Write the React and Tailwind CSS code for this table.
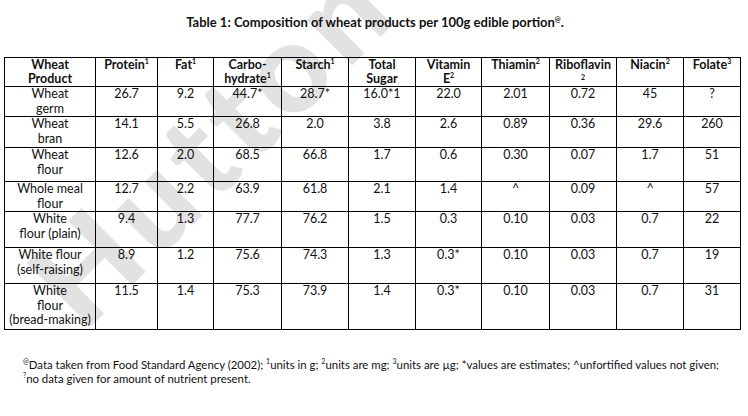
import React from "react";

const Sup = ({ children }) => (
  <span className="relative -top-[5px] text-[7px] leading-none">{children}</span>
);

const cols = [91, 62, 56, 68, 67, 67, 66, 68, 67, 67, 57];

const rows = [
  { h: 30, name: <>Wheat<br />germ</>, v: ["26.7", "9.2", "44.7*", "28.7*", "16.0*1", "22.0", "2.01", "0.72", "45", "?"] },
  { h: 31, name: <>Wheat<br />bran</>, v: ["14.1", "5.5", "26.8", "2.0", "3.8", "2.6", "0.89", "0.36", "29.6", "260"] },
  { h: 34, name: <>Wheat<br />flour</>, v: ["12.6", "2.0", "68.5", "66.8", "1.7", "0.6", "0.30", "0.07", "1.7", "51"] },
  { h: 30, name: <>Whole meal<br />flour</>, v: ["12.7", "2.2", "63.9", "61.8", "2.1", "1.4", "^", "0.09", "^", "57"] },
  { h: 36, name: <>White<br />flour (plain)</>, v: ["9.4", "1.3", "77.7", "76.2", "1.5", "0.3", "0.10", "0.03", "0.7", "22"] },
  { h: 36, name: <>White flour<br />(self-raising)</>, v: ["8.9", "1.2", "75.6", "74.3", "1.3", "0.3*", "0.10", "0.03", "0.7", "19"] },
  { h: 46, name: <>White<br />flour<br />(bread-making)</>, v: ["11.5", "1.4", "75.3", "73.9", "1.4", "0.3*", "0.10", "0.03", "0.7", "31"] },
];

const headers = [
  <>Wheat<br />Product</>,
  <>Protein<Sup>1</Sup></>,
  <>Fat<Sup>1</Sup></>,
  <>Carbo-<br />hydrate<Sup>1</Sup></>,
  <>Starch<Sup>1</Sup></>,
  <>Total<br />Sugar</>,
  <>Vitamin<br />E<Sup>2</Sup></>,
  <>Thiamin<Sup>2</Sup></>,
  <>Riboflavin<br /><span className="text-[7px] leading-none relative -top-[3px]">2</span></>,
  <>Niacin<Sup>2</Sup></>,
  <>Folate<Sup>3</Sup></>,
];

export default function App() {
  return (
    <div
      className="relative w-[748px] h-[416px] bg-white text-[#111] overflow-hidden"
      style={{ fontFamily: "Lato, 'Open Sans', sans-serif" }}
    >
      <div className="absolute left-[-50px] top-[78px] w-[520px] text-center rotate-[-45deg] text-[125px] font-black leading-none text-[#e2e2e2] tracking-[8px] select-none pointer-events-none">
        Hutton
      </div>
      <div className="relative">
        <div className="pt-[14px] text-center text-[13px] leading-[16px] font-bold pl-[2px]">
          Table 1: Composition of wheat products per 100g edible portion<Sup>@</Sup>.
        </div>
        <table className="mt-[27px] ml-[4px] w-[736px] table-fixed border-collapse text-[12.5px] leading-[14.5px]">
          <colgroup>
            {cols.map((w, i) => (
              <col key={i} style={{ width: w }} />
            ))}
          </colgroup>
          <thead>
            <tr className="h-[29px]">
              {headers.map((h, i) => (
                <th key={i} className="border border-black align-top text-center font-bold p-0 leading-[14px]">
                  {h}
                </th>
              ))}
            </tr>
          </thead>
          <tbody>
            {rows.map((r, i) => (
              <tr key={i} style={{ height: r.h }}>
                <td className="border border-black align-top text-center p-0">{r.name}</td>
                {r.v.map((v, j) => (
                  <td key={j} className="border border-black align-top text-center p-0">
                    {v}
                  </td>
                ))}
              </tr>
            ))}
          </tbody>
        </table>
        <div className="mt-[28px] pl-[23px] text-[11.4px] leading-[14px] whitespace-nowrap">
          <div>
            <Sup>@</Sup>Data taken from Food Standard Agency (2002); <Sup>1</Sup>units in g; <Sup>2</Sup>units are mg; <Sup>3</Sup>units are µg; *values are estimates; ^unfortified values not given;
          </div>
          <div>
            <Sup>?</Sup>no data given for amount of nutrient present.
          </div>
        </div>
      </div>
    </div>
  );
}
